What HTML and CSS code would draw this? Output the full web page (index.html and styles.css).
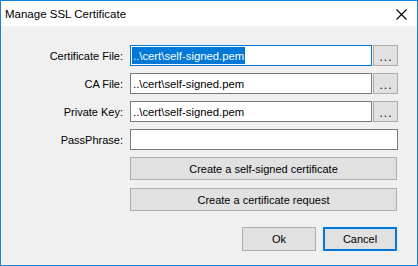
FILE: index.html
```html
<!DOCTYPE html>
<html lang="en">
<head>
    <meta charset="UTF-8">
    <title>Manage SSL Certificate</title>
    <link rel="stylesheet" href="styles.css">
</head>
<body>
    <div class="window">
        <div class="titlebar">
            <span class="title">Manage SSL Certificate</span>
            <svg class="close" width="11" height="11" viewBox="0 0 11 11">
                <path d="M0.5 0.5 L10.5 10.5 M10.5 0.5 L0.5 10.5" stroke="#000" stroke-width="1.1" fill="none"/>
            </svg>
        </div>

        <div class="content">
            <div class="form">
                <label>Certificate File:</label>
                <div class="field focused"><span class="selected">..\cert\self-signed.pem</span></div>
                <button class="browse">...</button>

                <label>CA File:</label>
                <div class="field"><span>..\cert\self-signed.pem</span></div>
                <button class="browse">...</button>

                <label>Private Key:</label>
                <div class="field"><span>..\cert\self-signed.pem</span></div>
                <button class="browse">...</button>

                <label>PassPhrase:</label>
                <div class="field wide"></div>
            </div>

            <div class="actions">
                <button class="btn">Create a self-signed certificate</button>
                <button class="btn">Create a certificate request</button>
            </div>

            <div class="footer">
                <button class="btn small">Ok</button>
                <button class="btn small default">Cancel</button>
            </div>
        </div>
    </div>
</body>
</html>
```

FILE: styles.css
```css
:root {
    --window-border: #1883d7;
    --accent: #0078d7;
    --face: #f0f0f0;
    --btn-face: #e1e1e1;
    --btn-border: #adadad;
    --field-border: #7a7a7a;
}

* {
    margin: 0;
    padding: 0;
    box-sizing: border-box;
    font-family: 'Liberation Sans', Arial, sans-serif;
}

body {
    background-color: #ffffff;
}

.window {
    width: 418px;
    height: 266px;
    border: 1px solid var(--window-border);
    background-color: var(--face);
    display: flex;
    flex-direction: column;
}

.titlebar {
    height: 25px;
    background-color: #ffffff;
    display: flex;
    align-items: center;
    justify-content: space-between;
    padding: 0 10px 0 4px;
}

.title {
    font-size: 11.5px;
    color: #000;
}

.close {
    display: block;
    margin-top: 1px;
}

.content {
    padding: 19px 20px 0 0;
    font-size: 11px;
    color: #000;
}

.form {
    display: grid;
    grid-template-columns: 128px 242px 25px;
    grid-auto-rows: 21px;
    row-gap: 7px;
    column-gap: 1px;
}

.form label {
    display: flex;
    align-items: center;
    justify-content: flex-end;
    padding-right: 6px;
}

.field {
    background-color: #ffffff;
    border: 1px solid var(--field-border);
    display: flex;
    align-items: center;
    padding: 1px 2px 1px 1px;
    white-space: nowrap;
    overflow: hidden;
    font-size: 11.3px;
}

.field span {
    padding-left: 1px;
}

.field.focused {
    border-color: var(--accent);
}

.field .selected {
    background-color: var(--accent);
    color: #ffffff;
    align-self: stretch;
    display: flex;
    align-items: center;
    padding-right: 1px;
}

.field.wide {
    grid-column: 2 / 4;
}

button {
    font-size: 11px;
    color: #000;
    background-color: var(--btn-face);
    border: 1px solid var(--btn-border);
}

.browse {
    font-size: 12px;
    letter-spacing: 1px;
    padding: 2px 0 0 1px;
}

.actions {
    margin: 7px 0 0 129px;
    display: flex;
    flex-direction: column;
    gap: 8px;
}

.btn {
    height: 23px;
    width: 100%;
}

.footer {
    margin-top: 16px;
    display: flex;
    justify-content: flex-end;
    gap: 7px;
}

.btn.small {
    width: 74px;
    height: 24px;
}

.btn.default {
    border: 2px solid var(--accent);
}
```
